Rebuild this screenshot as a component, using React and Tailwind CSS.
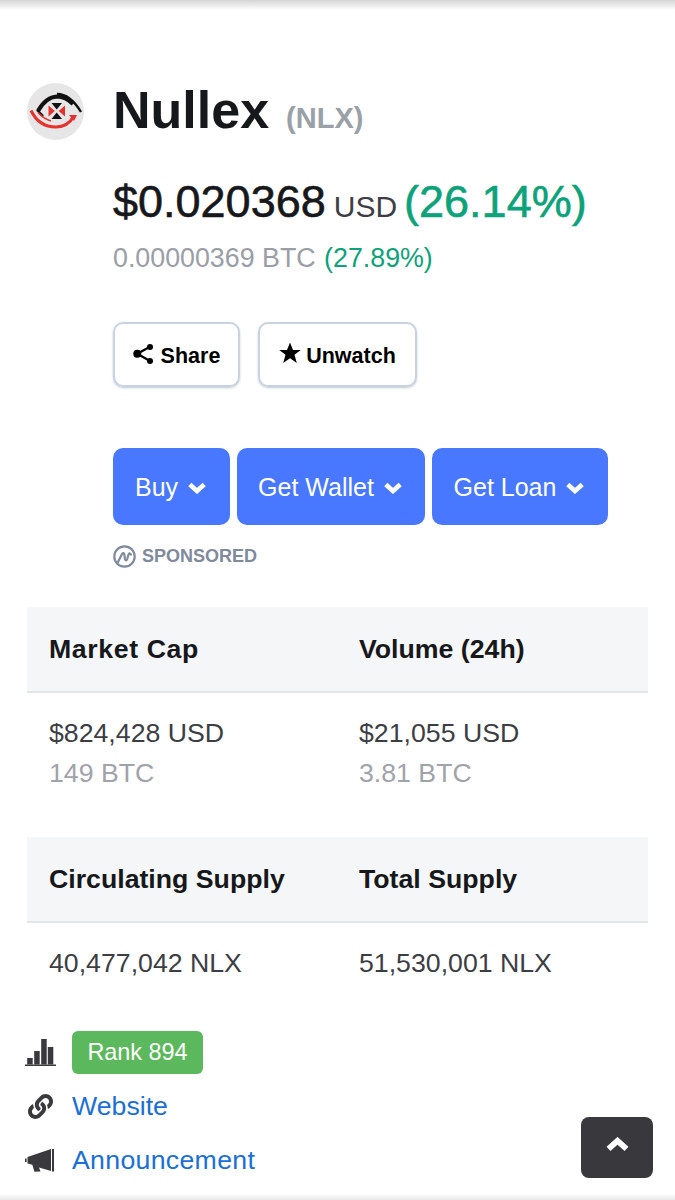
import React from 'react';
import { FaLink } from 'react-icons/fa';

const font = { fontFamily: '"Liberation Sans", Arial, sans-serif' };

function Logo() {
  return (
    <svg viewBox="0 0 57 57" className="w-[57px] h-[57px] shrink-0">
      <circle cx="28.5" cy="28.5" r="28.5" fill="#e6e6e6" />
      <path d="M30 11C40 11 48 19 54 29" fill="none" stroke="#111" strokeWidth="2.4" />
      <path d="M11 28C16 19 23 14 30 13.5C36 13.5 41 16 46 21" fill="none" stroke="#111" strokeWidth="4" />
      <path d="M10 27L16 33" fill="none" stroke="#111" strokeWidth="2.4" />
      <path d="M4 27.5C9 38 18 44 29 44C37 44 43 40 47 33" fill="none" stroke="#e8302c" strokeWidth="3" />
      <path d="M11 29.5C15 34 19 36.5 24 38" fill="none" stroke="#e8302c" strokeWidth="1.8" />
      <path d="M42 32H50L47 38Z" fill="#e8302c" />
      <path d="M24.5 20H35L29.7 26.5Z" fill="#111" />
      <path d="M24.5 36H35L29.7 29.5Z" fill="#111" />
      <path d="M21.5 22.5L27.8 28L21.5 33.5Z" fill="#e8302c" />
      <path d="M38 22.5L31.7 28L38 33.5Z" fill="#e8302c" />
    </svg>
  );
}

function Chevron({ up, className }) {
  return (
    <svg viewBox="0 0 18 12" className={`${className} ${up ? 'rotate-180' : ''}`} fill="none" stroke="currentColor" strokeWidth="4.6">
      <path d="M1.8 2.5L9 9L16.2 2.5" />
    </svg>
  );
}

function ShareIcon() {
  return (
    <svg viewBox="0 0 20 20" className="w-[20px] h-[20px] -mt-[6px]" fill="#000" stroke="#000">
      <path d="M4.3 9.7L17 2.7M4.3 9.7L17 17" fill="none" strokeWidth="2.2" />
      <circle cx="4.3" cy="9.7" r="4" stroke="none" />
      <circle cx="17" cy="3" r="3" stroke="none" />
      <circle cx="17" cy="17" r="3" stroke="none" />
    </svg>
  );
}

function StarIcon() {
  return (
    <svg viewBox="0 0 22 22" className="w-[22px] h-[22px] -mt-[7px]" fill="#000">
      <path d="M11 0.5L14 8H21.8L15.5 12.8L17.8 21L11 16.2L4.2 21L6.5 12.8L0.2 8H8Z" />
    </svg>
  );
}

function BarsIcon() {
  return (
    <svg viewBox="0 0 31 27" className="w-[31px] h-[27px] mt-[1px]" fill="#3a3a3e">
      <rect x="2.2" y="19" width="5.5" height="6.5" />
      <rect x="9.2" y="12" width="5.5" height="13.5" />
      <rect x="16.2" y="0" width="5.5" height="25.5" />
      <rect x="22.8" y="8" width="5.5" height="17.5" />
      <rect x="0" y="25.5" width="31" height="1.7" />
    </svg>
  );
}

function HornIcon() {
  return (
    <svg viewBox="0 0 29 23" className="w-[29px] h-[23px]" fill="#3a3a3e">
      <path d="M2.5 8L26 0V22L14 18.5L15.5 22.5L9.5 22.8L7.3 15.8L2.5 14.5Z" />
      <path d="M0 9.5H1.6V13H0Z" />
      <rect x="27" y="0" width="2" height="22.5" />
    </svg>
  );
}

function SponsorIcon() {
  return (
    <svg viewBox="0 0 23 23" className="w-[23px] h-[23px]" fill="none" stroke="#808a9d" strokeWidth="2.2">
      <circle cx="11.5" cy="11.5" r="10.2" />
      <path d="M5 17L9 9C10 7.5 11 8 11.3 9.5L12 14C12.5 16 13.5 16 14.2 14L15.5 9.5C16 8 17 8 18 9.5" strokeLinecap="round" />
    </svg>
  );
}

function BlueButton({ label, width }) {
  return (
    <button className={`${width} h-[77px] pt-[4px] pr-[2px] rounded-[10px] bg-[#4878ff] text-white text-[25px] flex items-center justify-center gap-[10px]`}>
      {label}
      <Chevron className="w-[18px] h-[12px]" />
    </button>
  );
}

function StatTable({ heads, children, className }) {
  return (
    <div className={className}>
      <div className="grid grid-cols-[310px_1fr] h-[86px] pt-[2px] items-center bg-[#f5f6f8] border-b-2 border-[#e3e5e8] pl-[22px] text-[26.7px] font-bold text-[#17181b]">
        {heads.map((h) => (
          <div key={h} className={h === 'Market Cap' ? 'tracking-[0.6px]' : ''}>{h}</div>
        ))}
      </div>
      <div className="grid grid-cols-[310px_1fr] pl-[22px] text-[26.7px] leading-[40px] text-[#3c3e44]">{children}</div>
    </div>
  );
}

export default function App() {
  return (
    <div style={font} className="relative h-[1200px] w-[675px] overflow-hidden bg-white">
      {/* phone edge shadows */}
      <div className="absolute top-0 inset-x-0 h-[10px] bg-gradient-to-b from-[#d4d4d4] to-white" />
      <div className="absolute bottom-0 inset-x-0 h-[6px] bg-gradient-to-t from-[#e8e8e8] to-white" />

      <div className="pt-[83px] pl-[27px] w-[648px]">
        <div className="flex items-start">
          <Logo />
          <div className="ml-[29px] -mt-[3px] flex items-baseline gap-[17px]">
            <span className="text-[52px] leading-[60px] font-bold text-[#17181b]">Nullex</span>
            <span className="text-[29px] font-bold text-[#9aa0a8]">(NLX)</span>
          </div>
        </div>

        <div className="pl-[86px]">
          <div className="mt-[27px] flex items-baseline h-[60px] whitespace-nowrap">
            <span className="text-[45px] text-[#17181b] [-webkit-text-stroke:0.6px_#17181b]">$0.020368</span>
            <span className="ml-[8px] text-[30px] text-[#3c3e44]">USD</span>
            <span className="ml-[7px] text-[45px] text-[#0ca27a] [-webkit-text-stroke:0.6px_#0ca27a]">(26.14%)</span>
          </div>
          <div className="mt-[12px] text-[26.8px] leading-[36px] text-[#9a9ea6] whitespace-nowrap">
            0.00000369 BTC <span className="ml-[1px] text-[#0ca27a]">(27.89%)</span>
          </div>

          <div className="mt-[46px] flex gap-[18px] text-[21.5px] font-bold text-black">
            <button className="w-[127px] h-[65px] pt-[5px] rounded-[10px] border-2 border-[#c9d3e0] shadow-[0_1px_2px_rgba(130,150,180,0.5)] flex items-center justify-center gap-[8px]">
              <ShareIcon />
              Share
            </button>
            <button className="w-[159px] h-[65px] pt-[5px] rounded-[10px] border-2 border-[#c9d3e0] shadow-[0_1px_2px_rgba(130,150,180,0.5)] flex items-center justify-center gap-[5px]">
              <StarIcon />
              Unwatch
            </button>
          </div>

          <div className="mt-[61px] flex gap-[7px] whitespace-nowrap">
            <BlueButton label="Buy" width="w-[117px]" />
            <BlueButton label="Get Wallet" width="w-[188px]" />
            <BlueButton label="Get Loan" width="w-[176px]" />
          </div>

          <div className="mt-[20px] flex items-center gap-[6px] h-[23px]">
            <SponsorIcon />
            <span className="text-[18px] font-bold text-[#808a9d]">SPONSORED</span>
          </div>
        </div>

        <StatTable heads={['Market Cap', 'Volume (24h)']} className="mt-[39px]">
          <div className="pt-[20px]">
            <div>$824,428 USD</div>
            <div className="text-[#a0a3aa]">149 BTC</div>
          </div>
          <div className="pt-[20px]">
            <div>$21,055 USD</div>
            <div className="text-[#a0a3aa]">3.81 BTC</div>
          </div>
        </StatTable>

        <StatTable heads={['Circulating Supply', 'Total Supply']} className="mt-[44px]">
          <div className="pt-[20px]">40,477,042 NLX</div>
          <div className="pt-[20px]">51,530,001 NLX</div>
        </StatTable>

        <div className="mt-[48px] -ml-[2px] flex flex-col text-[26.7px] text-[#1a6fd8]">
          <div className="flex items-center h-[43px]">
            <div className="w-[47px]"><BarsIcon /></div>
            <span className="h-[43px] w-[131px] pt-[2px] rounded-[6px] bg-[#5cb85c] text-white text-[23.4px] flex items-center justify-center">Rank 894</span>
          </div>
          <div className="mt-[11px] flex items-center h-[43px]">
            <div className="w-[47px] pl-[3px] text-[#3a3a3e]"><FaLink size={25} /></div>
            Website
          </div>
          <div className="mt-[11px] flex items-center h-[43px]">
            <div className="w-[47px]"><HornIcon /></div>
            <span className="tracking-[0.3px]">Announcement</span>
          </div>
        </div>
      </div>

      <button className="absolute left-[581px] top-[1117px] w-[72px] h-[61px] rounded-[8px] bg-[#39393d] text-white flex items-center justify-center">
        <Chevron up className="w-[23px] h-[15px] -mt-[6px]" />
      </button>
    </div>
  );
}
